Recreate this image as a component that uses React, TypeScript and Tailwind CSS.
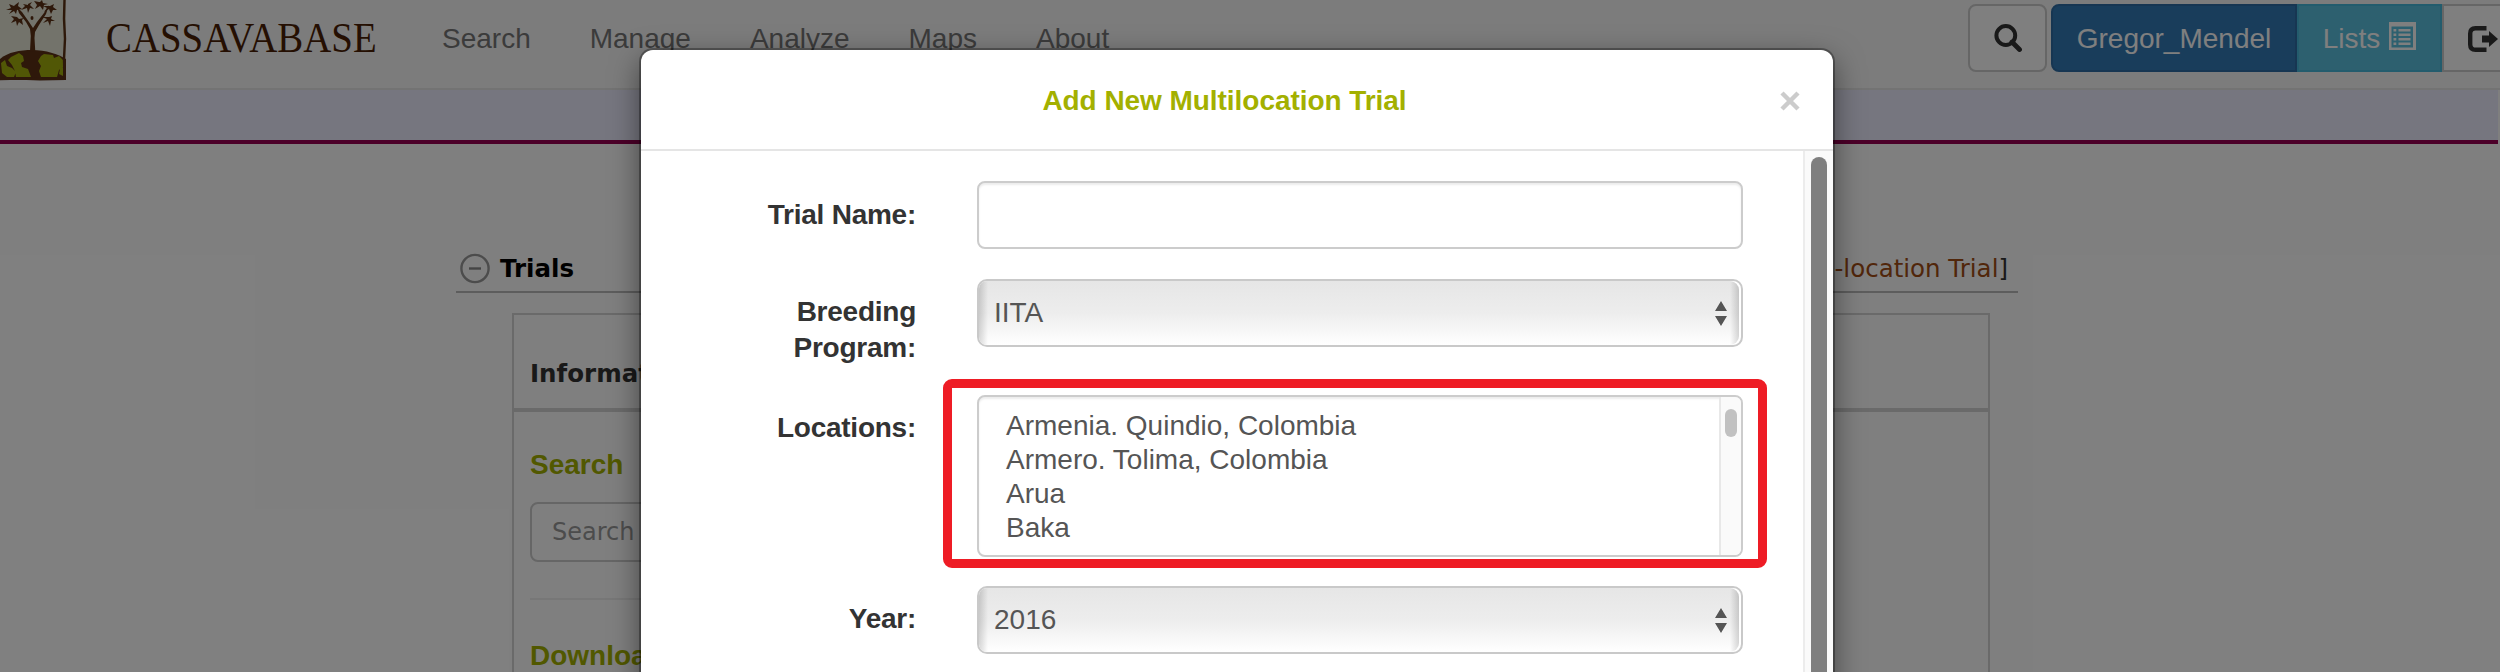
import React from "react";

function Logo() {
  return (
    <svg width="68" height="82" viewBox="0 0 68 82" className="block shrink-0">
      <rect x="0" y="0" width="66" height="80" fill="#e6e7d6" />
      <path d="M0 59C8 52 20 50 32 50c14 0 26 4 34 9v21H0z" fill="#5c3015" />
      <path d="M1 63l4-3 2 6 5 2 4 4-2 5H7l-5-4zM11 57l8-4 4 3 1 5-3 2 1 4 6 2 3 8H16l-1-6-3-6-4-5zM41 56l3-2 9 1 1 3 5-2 5 5v5l-5 4-2 7H41l-2-6 2-5-3-5zM60 69l3-2v9l-4-2z" fill="#a3af0c" />
      <path d="M30 51l.8-15-.8-7-4-7-7-9-2-6 5 5 7 10 4 6 4-6 7-9 5-8-3 9-7 11-4 7-.5 6 .8 14z" fill="#5c3015" />
      <g fill="#5c3015">
        <path d="M14 6L9 4l2 4-5 2 6 0-3 4 5-3 2 3 1-4 5-1-4-3 1-4-4 3z" />
        <path d="M28 5l-5-1 2 2-4 4 6-2 1 5 2-5 4 1-4-4 2-3-4 2z" />
        <path d="M17 17l-6-1 3 3-3 4 5-2 1 5 2-4 4 3-1-5 2-2-5 1z" />
        <path d="M39 2l-5-1 3 4-2 4 5-3 3 4 1-5 4-1-5-1-1-3-2 2z" />
        <path d="M49 6l-6 0 4 2-3 4 5-3 2 5 2-4 4 0-4-3 1-3-4 2z" />
        <path d="M48 17l-6 0 5 2-4 4 5-2 2 5 1-5 4 0-4-2 1-3-3 1z" />
        <ellipse cx="32" cy="18" rx="1.5" ry="2" />
      </g>
      <path d="M0 79l20-.5 20 .8 24.500-.5-.5-20 1-20-1-20 .5-19" fill="none" stroke="#5c3015" strokeWidth="2.4" />
    </svg>
  );
}

function SearchIcon() {
  return (
    <svg width="28" height="28" viewBox="0 0 28 28" className="block">
      <circle cx="11.800" cy="11.500" r="9.400" fill="none" stroke="#333" strokeWidth="4" />
      <path d="M18 18l7.500 7.500" stroke="#333" strokeWidth="4.800" strokeLinecap="round" />
    </svg>
  );
}

function ListIcon() {
  return (
    <svg width="27" height="28" viewBox="0 0 27 28" className="block">
      <path fill="#fff" fillRule="evenodd" d="M0 0h27v28H0zM2.500 4.500v21h21.500v-21z" />
      <path fill="#fff" d="M4.500 7h2.800v2.400H4.500zM9.500 7h12v2.400h-12zM4.500 11.500h2.800v2.400H4.500zM9.500 11.500h12v2.400h-12zM4.500 16h2.800v2.400H4.500zM9.500 16h12v2.400h-12zM4.500 20.500h2.800v2.400H4.500zM9.500 20.500h12v2.400h-12z" />
    </svg>
  );
}

function LogoutIcon() {
  return (
    <svg width="30" height="26" viewBox="0 0 30 26" className="block shrink-0">
      <path d="M18.500 2.200H7.500Q2.200 2.200 2.200 7.500v11q0 5.300 5.300 5.300h11" fill="none" stroke="#333" strokeWidth="4.400" />
      <path d="M14 9.500h7V5l9 8-9 8v-4.500h-7z" fill="#333" />
    </svg>
  );
}

function Arrows() {
  return (
    <svg width="12" height="25" viewBox="0 0 12 25" className="block">
      <path d="M6 0l6 10H0zM6 25l6-10H0z" fill="#555" />
    </svg>
  );
}

function SelectBox({ value }: { value: string }) {
  return (
    <div className="h-[68px] w-[766px] overflow-hidden rounded-[10px] border-2 border-[#c9c9c9] bg-white">
      <div className="flex h-full w-[760px] justify-between overflow-hidden rounded-r-[9px] bg-linear-to-b from-[#e6e6e6] via-[#ededed] to-white">
        <div className="h-full w-[9px] bg-linear-to-r from-black/15 to-transparent" />
        <div className="flex flex-1 items-center justify-between pr-[3px] pl-[6px]">
          <span>{value}</span>
          <Arrows />
        </div>
        <div className="h-full w-[9px] bg-linear-to-l from-black/15 to-transparent" />
      </div>
    </div>
  );
}

function Page() {
  return (
    <div className="h-[672px] w-[2500px] overflow-hidden bg-white">
      <header className="flex h-[90px] items-start border-b-2 border-[#e7e7e7] bg-[#f8f8f8]">
        <Logo />
        <div className="w-[374px] pt-[14px] pl-[38px]">
          <span className="inline-block origin-left scale-x-[0.925] font-['Liberation_Serif',serif] text-[42px] leading-[48px] text-[#4a1f05]">
            CASSAVABASE
          </span>
        </div>
        <nav className="flex gap-[59px] pt-[19px] leading-[40px] text-[#777]">
          <span>Search</span>
          <span>Manage</span>
          <span>Analyze</span>
          <span>Maps</span>
          <span>About</span>
        </nav>
        <div className="ml-auto -mr-[25px] flex h-[72px] pt-[4px] leading-[40px]">
          <div className="mr-[4px] flex h-[68px] w-[79px] items-center justify-center rounded-[8px] border-2 border-[#ccc] bg-white">
            <SearchIcon />
          </div>
          <div className="flex h-[68px] w-[246px] items-center justify-center rounded-l-[8px] border-2 border-[#2e6da4] bg-[#337ab7] pt-[2px] text-white">
            Gregor_Mendel
          </div>
          <div className="flex h-[68px] w-[145px] items-center justify-center gap-[9px] border-2 border-[#46b8da] bg-[#5bc0de] text-white">
            <span className="pt-[2px]">Lists</span>
            <span className="pb-[4px]">
              <ListIcon />
            </span>
          </div>
          <div className="flex h-[68px] w-[83px] items-center border-2 border-[#ccc] bg-white pt-[2px] pl-[24px]">
            <LogoutIcon />
          </div>
        </div>
      </header>
      <div className="h-[54px] w-[2498px] border-b-[4px] border-[#980052] bg-[#ececfe]" />
      <section className="ml-[456px] w-[1562px] pt-[105px] font-['DejaVu_Sans',sans-serif] text-[24px]">
        <div className="flex h-[44px] items-start justify-between border-b-2 border-[#bbb] pr-[10px] pl-[4px] text-[24.500px] leading-[40px]">
          <div className="flex items-start gap-[10px]">
            <svg width="30" height="31" viewBox="0 0 30 31" className="mt-[4px] block">
              <circle cx="15" cy="15.500" r="13.600" fill="none" stroke="#999" strokeWidth="2.400" />
              <path d="M9 15.500h12" stroke="#888" strokeWidth="2.400" />
            </svg>
            <b className="text-black">Trials</b>
          </div>
          <span className="text-[#333]">
            <span className="text-[#a24d14]">-location Trial</span>]
          </span>
        </div>
        <div className="mt-[20px] ml-[56px] h-[400px] w-[1478px] border-2 border-[#d5d5d5] text-[#333]">
          <div className="h-[97px] border-b-4 border-[#d5d5d5] pt-[39px] pl-[16px] text-[24.500px] leading-[40px]">
            <b>Information</b>
          </div>
          <div className="pt-[31px] pl-[16px]">
            <div className="font-['Liberation_Sans',sans-serif] text-[28px] leading-[44px] font-bold text-[#a3b000]">Search</div>
            <div className="mt-[15px] flex h-[60px] w-[460px] items-center rounded-[8px] border-2 border-[#ccc] pl-[20px] text-[#999]">
              Search
            </div>
            <div className="mt-[36px] h-[2px] w-[460px] bg-[#eee]" />
            <div className="mt-[34px] font-['Liberation_Sans',sans-serif] text-[28px] leading-[44px] font-bold text-[#a3b000]">Download</div>
          </div>
        </div>
      </section>
    </div>
  );
}

const labelClass = "w-[275px] shrink-0 text-right font-bold tracking-[-0.25px] text-[#333] leading-[36px]";

function TrialDialog() {
  return (
    <div className="absolute top-[50px] left-[641px] flex h-[700px] w-[1192px] flex-col overflow-hidden rounded-[12px] bg-white text-[#555] shadow-[0_0_0_2px_rgba(0,0,0,0.3),0_10px_30px_rgba(0,0,0,0.5)]">
      <div className="flex h-[101px] shrink-0 items-center border-b-2 border-[#e5e5e5] pt-[2px]">
        <h4 className="flex-1 pl-[40px] text-center font-bold tracking-[-0.05px] text-[#a3b000]">Add New Multilocation Trial</h4>
        <div className="flex w-[65px] justify-start pl-[12px]">
          <svg width="20" height="20" viewBox="0 0 20 20" className="block">
            <path d="M2 2l16 16M18 2L2 18" stroke="#ccc" strokeWidth="4.500" />
          </svg>
        </div>
      </div>
      <div className="flex flex-1">
        <div className="w-[1162px] shrink-0 pt-[30px]">
          <div className="flex gap-[61px]">
            <div className={labelClass}>
              <div className="pt-[16px]">Trial Name:</div>
            </div>
            <div className="h-[68px] w-[766px] rounded-[8px] border-2 border-[#ccc] shadow-[inset_0_2px_2px_rgba(0,0,0,0.075)]" />
          </div>
          <div className="mt-[30px] flex h-[116px] gap-[61px]">
            <div className={labelClass}>
              <div className="pt-[15px]">
                Breeding
                <br />
                Program:
              </div>
            </div>
            <SelectBox value="IITA" />
          </div>
          <div className="flex h-[191px] gap-[61px]">
            <div className={labelClass}>
              <div className="pt-[15px]">Locations:</div>
            </div>
            <div className="relative h-[162px] w-[766px]">
              <div className="flex h-[162px] justify-between overflow-hidden rounded-[8px] border-2 border-[#ccc] shadow-[inset_0_2px_2px_rgba(0,0,0,0.075)]">
                <ul className="pt-[12px] pl-[27px] leading-[34px]">
                  <li>Armenia. Quindio, Colombia</li>
                  <li>Armero. Tolima, Colombia</li>
                  <li>Arua</li>
                  <li>Baka</li>
                </ul>
                <div className="w-[22px] border-l-2 border-[#e8e8e8] bg-[#fafafa] pt-[12px] pl-[4px]">
                  <div className="h-[28px] w-[12px] rounded-full bg-[#c1c1c1]" />
                </div>
              </div>
              <div className="absolute -top-[16px] -left-[34px] h-[189px] w-[824px] rounded-[9px] border-[9px] border-[#ee1c25]" />
            </div>
          </div>
          <div className="flex gap-[61px]">
            <div className={labelClass}>
              <div className="pt-[15px]">Year:</div>
            </div>
            <SelectBox value="2016" />
          </div>
        </div>
        <div className="flex-1 border-l-2 border-[#ececec] bg-[#fafafa] pt-[6px] pl-[6px]">
          <div className="h-[600px] w-[16px] rounded-full bg-[#7f7f7f]" />
        </div>
      </div>
    </div>
  );
}

export default function App() {
  return (
    <div className="relative h-[672px] w-[2500px] overflow-hidden font-['Liberation_Sans',Arial,sans-serif] text-[28px]">
      <Page />
      <div className="absolute inset-0 bg-black/50" />
      <TrialDialog />
    </div>
  );
}
